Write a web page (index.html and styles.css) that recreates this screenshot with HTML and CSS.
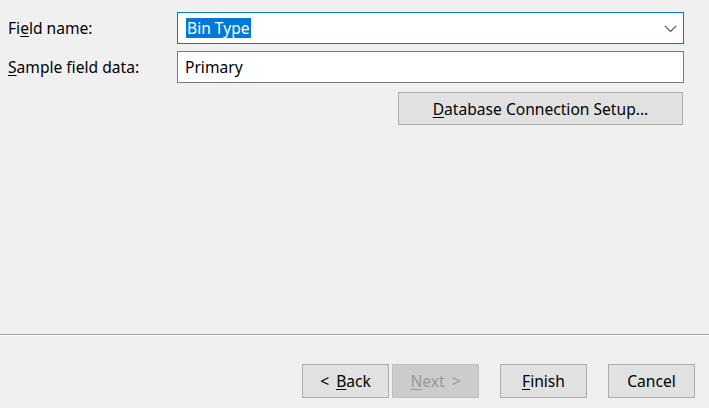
FILE: index.html
```html
<!DOCTYPE html>
<html>
<head>
<meta charset="utf-8">
<link rel="stylesheet" href="styles.css">
</head>
<body>
<div class="dialog">
  <div class="content">
    <div class="form">
      <label class="label">Fi<u>e</u>ld name:</label>
      <div class="combo">
        <span class="sel">Bin Type</span>
        <svg class="chev" width="13" height="8" viewBox="0 0 13 8"><polyline points="0.8,0.8 6.5,6.5 12.2,0.8" fill="none" stroke="#555" stroke-width="1.2"/></svg>
      </div>
      <label class="label"><u>S</u>ample field data:</label>
      <div class="input">Primary</div>
      <div></div>
      <div class="actions"><button class="btn db"><u>D</u>atabase Connection Setup...</button></div>
    </div>
  </div>
  <div class="footer">
    <button class="btn nav">&lt; <u>B</u>ack</button>
    <button class="btn nav disabled next"><u>N</u>ext &gt;</button>
    <button class="btn gap"><u>F</u>inish</button>
    <button class="btn gap">Cancel</button>
  </div>
</div>
</body>
</html>
```
FILE: styles.css
```css
* { box-sizing: border-box; }
html, body { margin: 0; padding: 0; }
body {
  background: #f0f0f0;
  font-family: "Noto Sans", "DejaVu Sans", sans-serif;
  font-size: 15.6px;
  color: #000;
}
.dialog {
  height: 408px;
  display: flex;
  flex-direction: column;
}
.content {
  flex: 1;
  padding: 12px 25px 0 8px;
}
.form {
  display: grid;
  grid-template-columns: 169px 1fr;
  row-gap: 7px;
  align-items: center;
}
.label { line-height: 20px; }
u { text-decoration: underline; text-underline-offset: 2px; }
.combo {
  height: 32px;
  border: 1px solid #0078d7;
  background: #fff;
  display: flex;
  align-items: center;
  justify-content: space-between;
  padding: 0 6px 0 8px;
}
.sel {
  background: #0078d7;
  color: #fff;
  line-height: 20px;
  padding: 0 1px;
}
.chev { margin-top: 1px; }
.input {
  height: 32px;
  border: 1px solid #7a7a7a;
  background: #fff;
  display: flex;
  align-items: center;
  padding-left: 7px;
}
.actions {
  display: flex;
  justify-content: flex-end;
  margin-top: 2px;
  padding-right: 1px;
}
.btn {
  font: inherit;
  color: #000;
  background: #e1e1e1;
  border: 1px solid #adadad;
  width: 87px;
  height: 34px;
  padding: 0;
  margin: 0;
}
.btn.nav { word-spacing: 3px; }
.btn.db { width: 285px; height: 33px; }
.btn.disabled {
  background: #cccccc;
  border-color: #bfbfbf;
  color: #999999;
}
.footer {
  border-top: 1px solid #a0a0a0;
  box-shadow: inset 0 1px 0 #ffffff;
  height: 74px;
  display: flex;
  justify-content: flex-end;
  padding: 29px 14px 0 0;
  align-items: flex-start;
}
.next { margin-left: 3px; }
.gap { margin-left: 21px; }
```
